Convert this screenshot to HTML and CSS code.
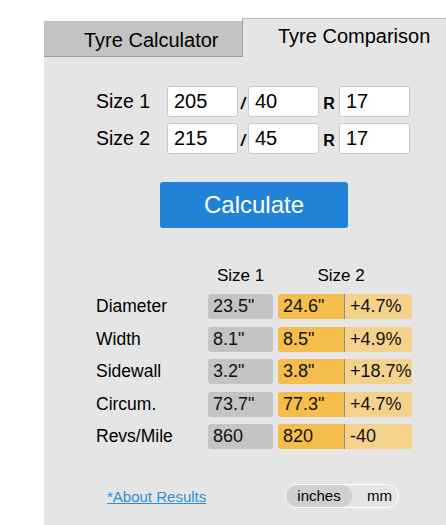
FILE: index.html
```html
<!DOCTYPE html>
<html>
<head>
<meta charset="utf-8">
<link rel="stylesheet" href="styles.css">
</head>
<body>
<div class="wrap">
  <div class="tabs">
    <div class="tab tab-inactive">Tyre Calculator</div>
    <div class="tab tab-active">Tyre Comparison</div>
  </div>
  <div class="panel">
    <div class="form">
      <div class="size-row">
        <span class="size-label">Size 1</span>
        <input class="field" type="text" value="205">
        <span class="sep sep-slash">/</span>
        <input class="field" type="text" value="40">
        <span class="sep sep-r">R</span>
        <input class="field" type="text" value="17">
      </div>
      <div class="size-row">
        <span class="size-label">Size 2</span>
        <input class="field" type="text" value="215">
        <span class="sep sep-slash">/</span>
        <input class="field" type="text" value="45">
        <span class="sep sep-r">R</span>
        <input class="field" type="text" value="17">
      </div>
      <button class="calc">Calculate</button>
    </div>

    <div class="results">
      <div class="head-row">
        <span class="head-spacer"></span>
        <span class="head head-1">Size 1</span>
        <span class="head head-2">Size 2</span>
      </div>
      <div class="row">
        <span class="label">Diameter</span>
        <span class="cell cell-gray">23.5"</span>
        <span class="pair"><span class="cell cell-orange">24.6"</span><span class="cell cell-light">+4.7%</span></span>
      </div>
      <div class="row">
        <span class="label">Width</span>
        <span class="cell cell-gray">8.1"</span>
        <span class="pair"><span class="cell cell-orange">8.5"</span><span class="cell cell-light">+4.9%</span></span>
      </div>
      <div class="row">
        <span class="label">Sidewall</span>
        <span class="cell cell-gray">3.2"</span>
        <span class="pair"><span class="cell cell-orange">3.8"</span><span class="cell cell-light">+18.7%</span></span>
      </div>
      <div class="row">
        <span class="label">Circum.</span>
        <span class="cell cell-gray">73.7"</span>
        <span class="pair"><span class="cell cell-orange">77.3"</span><span class="cell cell-light">+4.7%</span></span>
      </div>
      <div class="row">
        <span class="label">Revs/Mile</span>
        <span class="cell cell-gray">860</span>
        <span class="pair"><span class="cell cell-orange">820</span><span class="cell cell-light">-40</span></span>
      </div>
    </div>

    <div class="footer">
      <a class="about" href="#">*About Results</a>
      <div class="toggle">
        <span class="opt opt-on">inches</span>
        <span class="opt opt-off">mm</span>
      </div>
    </div>
  </div>
</div>
</body>
</html>
```

FILE: styles.css
```css
html, body {
  margin: 0;
  padding: 0;
  background: #ffffff;
  overflow: hidden;
}

body {
  font-family: "Liberation Sans", Arial, sans-serif;
  color: #000;
  width: 446px;
  height: 525px;
}

.wrap {
  margin-left: 44px;
  padding-top: 18px;
  width: 420px;
}

.tabs {
  display: flex;
  align-items: flex-end;
  height: 39px;
}

.tab {
  box-sizing: border-box;
  font-size: 20px;
  line-height: 23px;
  white-space: nowrap;
}

.tab-inactive {
  width: 198px;
  height: 36px;
  background: #c3c3c3;
  border-bottom: 1px solid #9a9a9a;
  padding: 8px 0 0 40px;
}

.tab-active {
  flex: 1;
  height: 39px;
  background: #e5e5e5;
  border-top: 1px solid #bdbdbd;
  border-left: 1px solid #a8a8a8;
  padding: 6px 0 0 35px;
}

.panel {
  background: #e5e5e5;
  height: 480px;
  padding-top: 29px;
  box-sizing: border-box;
}

.form {
  margin-left: 52px;
  width: 314px;
  display: flex;
  flex-direction: column;
  align-items: flex-start;
}

.size-row {
  display: flex;
  align-items: center;
  height: 31px;
  margin-bottom: 6px;
}

.size-label {
  width: 71px;
  font-size: 19.5px;
}

.field {
  box-sizing: border-box;
  width: 71px;
  height: 31px;
  margin: 0;
  border: 1px solid #c9c9c9;
  border-radius: 3px;
  background: #ffffff;
  padding: 0 0 0 6px;
  font-family: "Liberation Sans", Arial, sans-serif;
  font-size: 20px;
  color: #000;
  outline: none;
}

.sep {
  font-weight: bold;
  font-size: 16px;
  text-align: center;
  padding-top: 4px;
}

.sep-slash {
  width: 10px;
  font-style: italic;
}

.sep-r {
  width: 20px;
}

.calc {
  align-self: center;
  margin-top: 22px;
  margin-left: 2px;
  width: 188px;
  height: 46px;
  border: none;
  border-radius: 3px;
  background: #2183d7;
  color: #ffffff;
  font-family: "Liberation Sans", Arial, sans-serif;
  font-size: 24px;
  padding: 0;
}

.results {
  margin-left: 52px;
  margin-top: 38px;
}

.head-row {
  display: flex;
  height: 20px;
  line-height: 20px;
  font-size: 17px;
  margin-bottom: 8px;
}

.head-spacer {
  width: 112px;
}

.head-1 {
  width: 65px;
  text-align: center;
}

.head-2 {
  margin-left: 5px;
  width: 126px;
  text-align: center;
}

.row {
  display: flex;
  align-items: center;
  height: 25px;
  margin-bottom: 7.5px;
}

.label {
  width: 112px;
  font-size: 17.5px;
}

.cell {
  box-sizing: border-box;
  height: 25px;
  line-height: 25px;
  padding-left: 5px;
  font-size: 18px;
  white-space: nowrap;
  overflow: hidden;
  color: #111;
}

.cell-gray {
  width: 65px;
  background: #c4c4c4;
  border-radius: 3px;
}

.pair {
  display: flex;
  margin-left: 5px;
}

.cell-orange {
  width: 67px;
  background: #f5bd4b;
  border-right: 1px solid #8e8e8e;
  border-radius: 3px 0 0 3px;
}

.cell-light {
  width: 67px;
  background: #f5d28b;
  border-radius: 0 3px 3px 0;
}

.footer {
  display: flex;
  align-items: center;
  margin-left: 63px;
  width: 292px;
  margin-top: 35px;
}

.about {
  font-size: 15px;
  color: #2a8ddf;
  text-decoration: underline;
}

.toggle {
  margin-left: auto;
  display: flex;
  box-sizing: border-box;
  height: 24px;
  border: 1px solid #ffffff;
  border-radius: 12px;
  font-size: 15px;
}

.opt {
  box-sizing: border-box;
  height: 22px;
  line-height: 22px;
  text-align: center;
}

.opt-on {
  width: 66px;
  background: #d0d0d0;
  border-radius: 11px;
}

.opt-off {
  width: 46px;
  padding-left: 9px;
}
```
